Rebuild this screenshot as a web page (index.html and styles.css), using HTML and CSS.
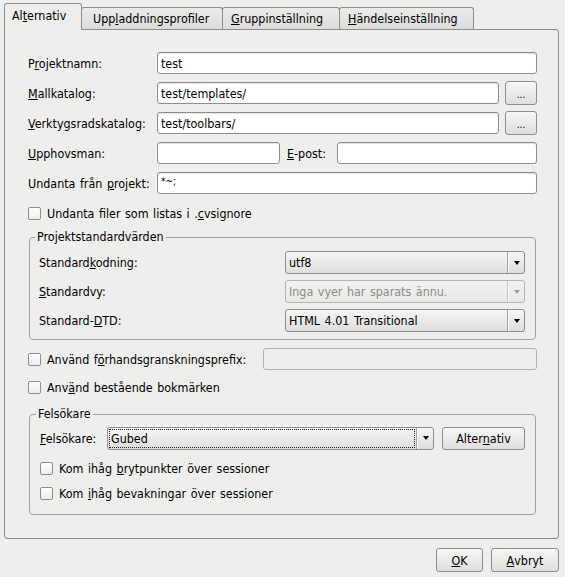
FILE: index.html
```html
<!DOCTYPE html>
<html lang="sv">
<head>
<meta charset="utf-8">
<title>Projektegenskaper</title>
<link rel="stylesheet" href="styles.css">
</head>
<body>
<div class="dialog">
  <div class="tabs">
    <div class="tab active w1">Al<u>t</u>ernativ</div>
    <div class="tab w2">Upp<u>l</u>addningsprofiler</div>
    <div class="tab w3"><u>G</u>ruppinställning</div>
    <div class="tab w4"><u>H</u>ändelseinställning</div>
  </div>
  <div class="panel">
    <div class="row">
      <span class="lbl">P<u>r</u>ojektnamn:</span>
      <div class="input grow">test</div>
    </div>
    <div class="row">
      <span class="lbl"><u>M</u>allkatalog:</span>
      <div class="input grow">test/templates/</div>
      <div class="btn dots">...</div>
    </div>
    <div class="row">
      <span class="lbl"><u>V</u>erktygsradskatalog:</span>
      <div class="input grow">test/toolbars/</div>
      <div class="btn dots">...</div>
    </div>
    <div class="row">
      <span class="lbl"><u>U</u>pphovsman:</span>
      <div class="input author"></div>
      <span class="lbl mail"><u>E</u>-post:</span>
      <div class="input grow"></div>
    </div>
    <div class="row">
      <span class="lbl">Undanta från <u>p</u>rojekt:</span>
      <div class="input grow small">*~;</div>
    </div>
    <div class="row check-row first-check">
      <span class="check"></span>
      <span>Undanta filer som listas i .<u>c</u>vsignore</span>
    </div>

    <fieldset class="group defaults">
      <legend>Projektstandardvärden</legend>
      <div class="crow">
        <span class="glbl">Standard<u>k</u>odning:</span>
        <div class="combo"><div class="val">utf8</div><div class="arr"></div></div>
      </div>
      <div class="crow">
        <span class="glbl"><u>S</u>tandardvy:</span>
        <div class="combo disabled"><div class="val">Inga vyer har sparats ännu.</div><div class="arr"></div></div>
      </div>
      <div class="crow">
        <span class="glbl">Standard-<u>D</u>TD:</span>
        <div class="combo"><div class="val">HTML 4.01 Transitional</div><div class="arr"></div></div>
      </div>
    </fieldset>

    <div class="row check-row prefix-row">
      <span class="check"></span>
      <span class="prefix-lbl">Använd f<u>ö</u>rhandsgranskningsprefix:</span>
      <div class="input disabled grow"></div>
    </div>
    <div class="row check-row bookmark-row">
      <span class="check"></span>
      <span>Anv<u>ä</u>nd bestående bokmärken</span>
    </div>

    <fieldset class="group debugger">
      <legend>Felsökare</legend>
      <div class="row dbg-row">
        <span class="dbg-lbl"><u>F</u>elsökare:</span>
        <div class="combo focus grow"><div class="val"><span>Gubed</span></div><div class="arr"></div></div>
        <div class="btn alt">Alter<u>n</u>ativ</div>
      </div>
      <div class="check-row small-check first-small">
        <span class="check"></span>
        <span>Kom ihåg <u>b</u>rytpunkter över sessioner</span>
      </div>
      <div class="check-row small-check">
        <span class="check"></span>
        <span>Kom <u>i</u>håg bevakningar över sessioner</span>
      </div>
    </fieldset>
  </div>
  <div class="footer">
    <div class="btn ok"><u>O</u>K</div>
    <div class="btn cancel"><u>A</u>vbryt</div>
  </div>
</div>
</body>
</html>
```

FILE: styles.css
```css
* { box-sizing: border-box; }
html, body { margin: 0; padding: 0; }
body {
  background: #eeeeec;
  font-family: "DejaVu Sans Condensed", "DejaVu Sans", sans-serif;
  font-size: 12.4px;
  word-spacing: 1px;
  color: #000;
  width: 565px;
  height: 577px;
  overflow: hidden;
}
u { text-decoration: underline; text-underline-offset: 1px; }

.tabs {
  display: flex;
  align-items: flex-end;
  padding: 3px 0 0 4px;
  margin-bottom: -1px;
  height: 30px;
}
.tab {
  height: 22px;
  margin-bottom: 1px;
  margin-left: -1px;
  border: 1px solid #8e8e8c;
  border-bottom: none;
  border-radius: 3px 3px 0 0;
  background: linear-gradient(#ebebe9, #dcdcda);
  display: flex;
  align-items: center;
  padding: 0 0 0 8px;
  white-space: nowrap;
}
.tab.active {
  margin-left: 0;
  height: 27px;
  margin-bottom: 0;
  background: #eeeeec;
  position: relative;
  z-index: 1;
  padding-bottom: 3px;
  padding-left: 7px;
}
.w1 { width: 78px; }
.w2 { width: 142px; padding-left: 11px; }
.w3 { width: 118px; }
.w4 { width: 135px; }

.panel {
  margin: 0 6px 0 4px;
  border: 1px solid #8e8e8c;
  border-radius: 0 3px 3px 3px;
  padding: 21px 21px 23px 23px;
}

.row {
  display: flex;
  align-items: center;
  height: 24px;
  margin-bottom: 6px;
}
.lbl { width: 129px; flex: none; white-space: nowrap; }
.lbl.mail { width: 50px; margin-left: 7px; }
.grow { flex: 1; }

.input {
  height: 22px;
  border: 1px solid #8e8e8c;
  border-radius: 3px;
  background: #fff;
  box-shadow: inset 0 1px 0 #e4e4e2;
  display: flex;
  align-items: center;
  padding: 0 3px;
  white-space: nowrap;
}
.input.author { width: 123px; flex: none; }
.input.small { font-size: 10px; align-items: flex-start; padding-top: 3px; }
.input.disabled {
  background: #eeeeec;
  border-color: #b2b2b0;
  box-shadow: none;
}

.btn {
  height: 24px;
  border: 1px solid #8e8e8c;
  border-radius: 3px;
  background: linear-gradient(#f7f7f5, #dededc);
  display: flex;
  align-items: center;
  justify-content: center;
  flex: none;
  white-space: nowrap;
}
.btn.dots { width: 32px; margin-left: 6px; font-size: 10px; padding-top: 3px; }

.check-row { display: flex; align-items: center; }
.check {
  width: 13px;
  height: 13px;
  flex: none;
  border: 1px solid #8e8e8c;
  border-radius: 2px;
  background: linear-gradient(#fdfdfd, #eeeeec);
  margin-right: 6px;
}
.first-check { margin: 5px 0 5px 0; }

.group {
  margin: 0 1px;
  border: 1px solid #a2a2a0;
  border-radius: 4px;
  min-width: 0;
}
.group legend {
  line-height: 14px;
  padding: 0 2px;
  margin-left: -4px;
}
.defaults { padding: 7px 10px 7px 9px; }
.crow {
  display: flex;
  align-items: center;
  height: 23px;
  margin-bottom: 6px;
}
.crow:last-child { margin-bottom: 0; }
.glbl { flex: 1; white-space: nowrap; }

.combo {
  display: flex;
  height: 23px;
  border: 1px solid #8e8e8c;
  border-radius: 3px;
  background: linear-gradient(#f6f6f4, #dededc);
  flex: none;
}
.crow .combo { width: 240px; }
.combo .val {
  flex: 1;
  display: flex;
  align-items: center;
  padding-left: 3px;
  white-space: nowrap;
}
.combo .arr {
  width: 17px;
  flex: none;
  border-left: 1px solid #a2a2a0;
  box-shadow: inset 1px 0 0 #fafafa;
  display: flex;
  align-items: center;
  justify-content: center;
}
.combo .arr::after {
  content: "";
  border-left: 3.5px solid transparent;
  border-right: 3.5px solid transparent;
  border-top: 4px solid #000;
  margin-left: 1px;
}
.combo.disabled {
  border-color: #b4b4b2;
  background: linear-gradient(#f2f2f0, #e8e8e6);
  color: #8c8c8a;
}
.combo.disabled .arr { border-left-color: #c2c2c0; }
.combo.disabled .arr::after { border-top-color: #9a9a98; }
.combo.focus .val {
  margin: 1px;
  border: 1px dotted #222;
  padding-left: 1px;
}
.combo.focus { flex: 1; }

.prefix-row { margin: 7px 0 0 0; }
.prefix-lbl { width: 216px; flex: none; white-space: nowrap; }
.bookmark-row { margin: 4px 0 8px 0; }

.debugger { padding: 5px 10px 11px 10px; }
.dbg-row { margin-bottom: 0; }
.dbg-lbl { width: 67px; flex: none; }
.btn.alt { width: 83px; height: 23px; margin-left: 8px; }
.small-check { height: 20px; margin-top: 5px; }
.small-check.first-small { margin-top: 8px; }

.footer {
  display: flex;
  justify-content: flex-end;
  gap: 8px;
  padding: 9px 6px 0 0;
}
.btn.ok { width: 47px; }
.btn.cancel { width: 68px; }
```
